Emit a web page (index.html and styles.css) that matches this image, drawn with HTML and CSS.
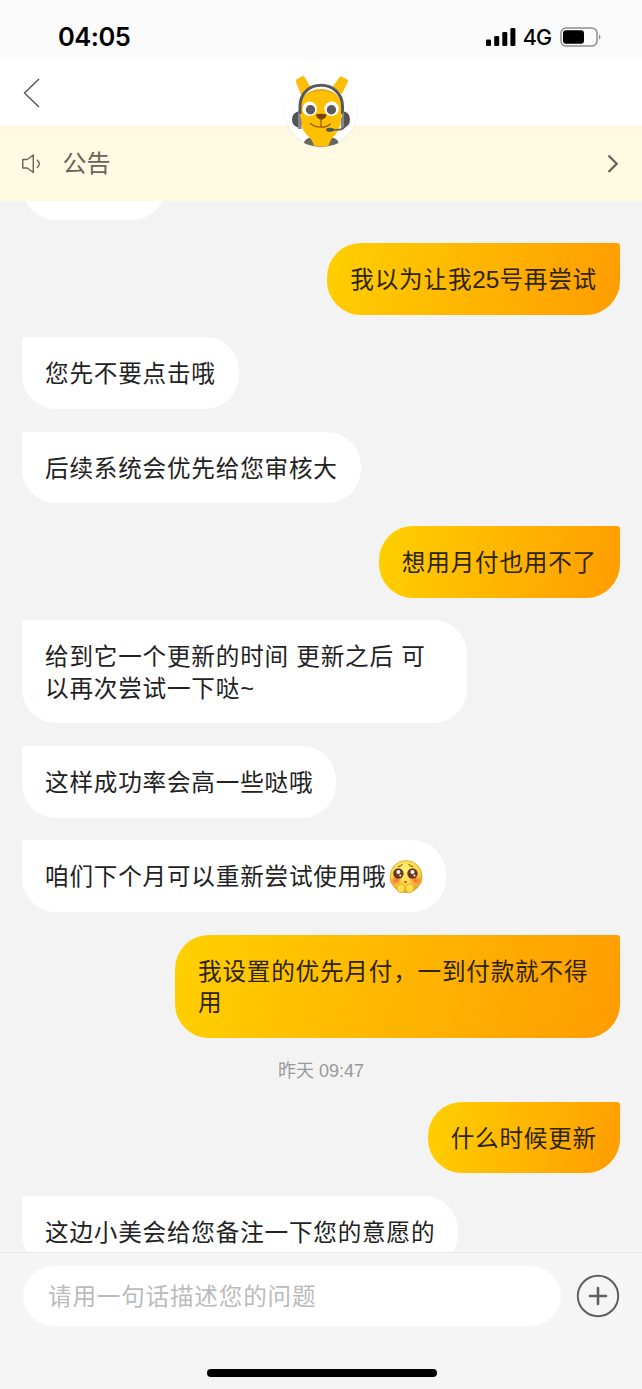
FILE: index.html
```html
<!DOCTYPE html>
<html lang="zh-CN">
<head>
<meta charset="utf-8">
<title>公告</title>
<link rel="stylesheet" href="styles.css">
</head>
<body>
<div class="phone">
  <header class="status">
    <span class="clock">04:05</span>
    <div class="indicators">
      <svg class="signal" width="30" height="20" viewBox="0 0 30 20"><rect x="0" y="12.5" width="5" height="6.500" rx="1.3"/><rect x="8.2" y="9" width="5" height="10" rx="1.3"/><rect x="16.3" y="5" width="5" height="14" rx="1.3"/><rect x="24.4" y="1" width="5" height="18" rx="1.3"/></svg>
      <span class="network">4G</span>
      <svg class="battery" width="42" height="20" viewBox="0 0 42 20"><rect x="1" y="1" width="36" height="18" rx="5" fill="none" stroke="#8e8e8e" stroke-width="1.5"/><rect x="3" y="3.3" width="21" height="13.5" rx="3"/><path d="M39 7.2Q42 10 39 12.8Z" fill="#8e8e8e"/></svg>
    </div>
  </header>
  <nav class="nav">
    <svg class="back" width="18" height="30" viewBox="0 0 18 30"><path d="M16 1 1.500 15 16 29" fill="none" stroke="#555" stroke-width="1.4"/></svg>
    <svg class="avatar" width="76" height="78" viewBox="0 0 76 78">
      <circle cx="38" cy="39" r="37" fill="#e9e7dc" opacity=".55"/>
      <circle cx="38" cy="38" r="36.500" fill="#fff"/>
      <path d="M21 71Q21.500 66.500 27.500 65.500V62H49v3.500Q55 66.500 55.500 71Q38 78.500 21 71Z" fill="#686860"/>
      <path d="M12.800 9.500Q12.300 8 13.800 7.200L19 4.200Q20.600 3.500 21.600 5L27.500 15 18 23ZM65 9.500Q65.500 8 64 7.200L58.800 4.800Q57.200 4 56.200 5.500L49.500 15 59 22Z" fill="#fdbd08"/>
      <path d="M16.800 38C16 25 26 17.500 38 17.500S60 25 59 38C58.500 50 57 58 51.500 63.500Q48 66.500 45.500 73.500Q38 75.500 31 73.500Q28.500 66.500 24.500 63.500C18.500 58 17 50 16.800 38Z" fill="#ffc000"/>
      <path d="M19 27q7-10 19-10t19 10q-7-8-19-8t-19 8Z" fill="#e8a51b"/>
      <path d="M17 42V34C17 22 26 13.200 38 13.200S59.500 22 59.500 34v8" fill="none" stroke="#595959" stroke-width="3"/>
      <path d="M17 39v17q-8-1-8-8.500T17 39Zm42.500 0v17q7.500-1 7.500-8.500T59.500 39Z" fill="#555559"/>
      <path d="M15 39q4.500 6 3.500 18h-3.500Zm46 0q-4 6-3 18h3Z" fill="#85858b"/>
      <circle cx="26.700" cy="36.800" r="7.300" fill="#fff"/><circle cx="48.600" cy="36.800" r="7.300" fill="#fff"/>
      <circle cx="27.500" cy="37.700" r="4.700" fill="#5b5b61"/><circle cx="48.400" cy="37.700" r="4.700" fill="#5b5b61"/>
      <path d="M33 42.500q4.800-1.600 10.500 0 0 3.500-5.300 5.500-5.200-1.800-5.200-5.500Z" fill="#74430d"/>
      <path d="M38 47v8M27.300 51.500q4.500 3.700 10.700 3.700t9.300-3.200" fill="none" stroke="#985c0b" stroke-width="1.300" stroke-linecap="round"/>
      <path d="M62 54.500q-2 3.300-8 3.300h-5" fill="none" stroke="#595955" stroke-width="1.600"/><ellipse cx="47" cy="57.800" rx="4" ry="2" fill="#555"/>
    </svg>
  </nav>
  <section class="notice">
    <svg class="speaker" width="20" height="20" viewBox="0 0 20 20" fill="none" stroke="#66645b" stroke-width="1.400" stroke-linejoin="round" stroke-linecap="round"><path d="M.8 5.500H5.200L11.300 1v17.500L5.200 14H.8Z"/><path d="M15.300 6.200q4 3.600 0 7.200"/></svg>
    <span class="notice-title">公告</span>
    <svg class="more" width="12" height="20" viewBox="0 0 12 20"><path d="m1.500 1.500 8.200 8.300-8.200 8.200" fill="none" stroke="#66645b" stroke-width="2.300"/></svg>
  </section>
  <main class="chat">
    <div class="bubble agent cut"></div>
    <div class="bubble user">我以为让我<span class="num">25</span>号再尝试</div>
    <div class="bubble agent">您先不要点击哦</div>
    <div class="bubble agent">后续系统会优先给您审核大</div>
    <div class="bubble user">想用月付也用不了</div>
    <div class="bubble agent full">给到它一个更新的时间 更新之后 可以再次尝试一下哒~</div>
    <div class="bubble agent">这样成功率会高一些哒哦</div>
    <div class="bubble agent with-emoji"><span>咱们下个月可以重新尝试使用哦</span><svg class="emoji" width="34" height="34" viewBox="0 0 34 34">
      <defs><radialGradient id="face" cx=".45" cy=".3" r=".7"><stop offset="0" stop-color="#fff27b"/><stop offset=".65" stop-color="#fcd746"/><stop offset="1" stop-color="#df9d25"/></radialGradient><radialGradient id="blush"><stop offset="0" stop-color="#f9642e"/><stop offset="1" stop-color="#f9742e" stop-opacity="0"/></radialGradient></defs>
      <circle cx="17" cy="16.500" r="16" fill="url(#face)" stroke="#d9a12b" stroke-width=".8"/>
      <ellipse cx="7" cy="20.500" rx="6.500" ry="5" fill="url(#blush)"/><ellipse cx="26.500" cy="20.500" rx="6.500" ry="5" fill="url(#blush)"/>
      <path d="M9.500 6.500q2.500-.3 3.500-2M23.500 6.500q-2.500-.3-3.500-2" fill="none" stroke="#9b641b" stroke-width="1.300" stroke-linecap="round"/>
      <circle cx="9.400" cy="13.500" r="5.200" fill="#6e351a"/><circle cx="23.500" cy="13.500" r="5.200" fill="#6e351a"/>
      <g fill="#fff"><circle cx="9.400" cy="12" r="2"/><circle cx="11.300" cy="15.500" r="1"/><circle cx="23.500" cy="12" r="2"/><circle cx="25.400" cy="15.500" r="1"/></g>
      <ellipse cx="16.500" cy="22" rx="1.500" ry="1.100" fill="#b95026"/>
      <circle cx="12" cy="28.300" r="4.200" fill="#ffdf45" stroke="#d79b25" stroke-width=".8"/><circle cx="20.600" cy="28.300" r="4.200" fill="#ffdf45" stroke="#d79b25" stroke-width=".8"/>
    </svg></div>
    <div class="bubble user full">我设置的优先月付，一到付款就不得用</div>
    <time class="stamp">昨天 09:47</time>
    <div class="bubble user">什么时候更新</div>
    <div class="bubble agent">这边小美会给您备注一下您的意愿的</div>
  </main>
  <footer class="composer">
    <div class="entry">
      <div class="field">请用一句话描述您的问题</div>
      <svg width="44" height="44" viewBox="0 0 44 44" fill="none" stroke="#606060"><circle cx="22" cy="22" r="20.200" stroke-width="2"/><path d="M14 22h16M22 14v16" stroke-width="2.600" stroke-linecap="round"/></svg>
    </div>
    <div class="home"></div>
  </footer>
</div>
</body>
</html>
```
FILE: styles.css
```css
* { box-sizing: border-box; }
body { margin: 0; background: #f3f3f3; font-family: "Liberation Sans", "Noto Sans CJK SC", sans-serif; }
svg { display: block; flex: none; }
.phone { width: 642px; height: 1389px; display: flex; flex-direction: column; overflow: hidden; }
.status { height: 60px; flex: none; background: #fbfbfb; display: flex; justify-content: space-between; align-items: center; padding: 14px 40px 0 58px; color: #000; }
.clock { font: 600 25.500px/32px Inter, sans-serif; letter-spacing: -0.500px; }
.indicators { display: flex; align-items: center; }
.network { font: 500 21.500px/30px Inter, sans-serif; margin: 0 9px 0 7px; letter-spacing: -1px; }
.nav { height: 66px; flex: none; background: #fff; position: relative; padding: 18px 0 0 23px; }
.avatar { position: absolute; left: 283px; top: 12px; z-index: 2; }
.notice { height: 75px; flex: none; background: linear-gradient(#fdf8df, #fffae1 14px); display: flex; align-items: center; padding: 0 23px 0 22px; color: #66645b; }
.notice-title { flex: 1; font-size: 24px; line-height: 32px; margin-left: 20.500px; }
.chat { flex: 1; min-height: 0; overflow: hidden; display: flex; flex-direction: column; align-items: flex-start; gap: 22.700px; padding: 0 22px; }
.bubble { flex: none; max-width: 445px; padding: 22px 23px 18px 23px; font-size: 23.600px; letter-spacing: .8px; line-height: 31.600px; color: #222; }
.agent { background: #fff; border-radius: 3px 34px 34px 34px; }
.user { align-self: flex-end; background: linear-gradient(105deg, #ffd000, #ff9c00); border-radius: 34px 3px 34px 34px; color: #2c2408; }
.full { width: 445px; }
.num { letter-spacing: 0; font-size: 24.400px; line-height: 1; }
.cut { width: 144px; height: 71.600px; margin-top: -52.200px; }
.with-emoji { display: flex; align-items: center; }
.emoji { align-self: flex-start; margin: -2px 0 -4px 2.500px; }
.stamp { align-self: center; height: 18.500px; line-height: 20px; font-size: 18px; color: #999; }
.composer { height: 137px; flex: none; background: #f5f5f5; border-top: 1px solid #e8e8e8; padding: 13px 22px 0 23px; display: flex; flex-direction: column; align-items: center; }
.entry { width: 100%; display: flex; align-items: center; justify-content: space-between; }
.field { width: 538px; height: 60px; border-radius: 30px; background: #fff; padding-left: 25px; font-size: 23.600px; letter-spacing: .8px; line-height: 62px; color: #bbb; }
.home { width: 230px; height: 8px; border-radius: 4px; background: #000; margin-top: 43px; }
```
